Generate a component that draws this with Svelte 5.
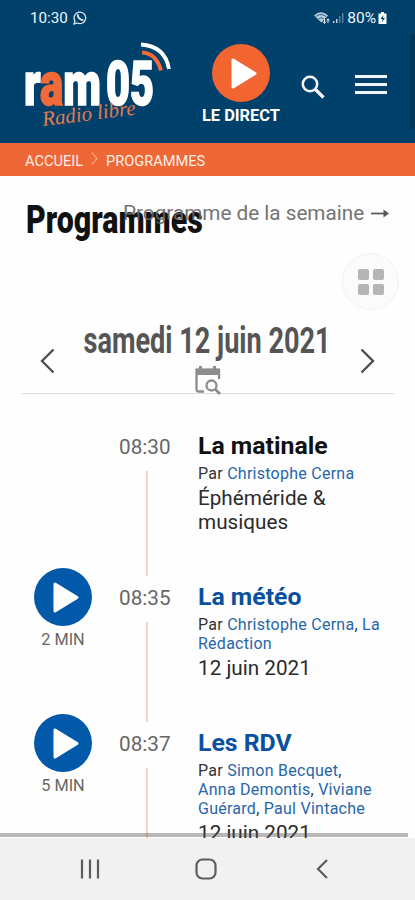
<script>
  const shows = [
    { time: '08:30', title: 'La matinale', authors: ['Christophe Cerna'], text: 'Éphéméride & musiques', height: 151 },
    { time: '08:35', title: 'La météo', authors: ['Christophe Cerna', 'La Rédaction'], text: '12 juin 2021', duration: '2 MIN', height: 146 },
    { time: '08:37', title: 'Les RDV', authors: ['Simon Becquet', 'Anna Demontis', 'Viviane Guérard', 'Paul Vintache'], text: '12 juin 2021', duration: '5 MIN', height: 146 }
  ];
</script>

{#snippet play(color)}
  <svg class="play" viewBox="0 0 58 58" width="58" height="58">
    <circle cx="29" cy="29" r="29" fill={color} />
    <path d="M21 16v27L43 29.5z" fill="#fff" stroke="#fff" stroke-width="3" stroke-linejoin="round" />
  </svg>
{/snippet}

<div class="phone">
  <header>
    <div class="status">
      <span class="clock">10:30</span>
      <svg class="wa" width="14" height="14" viewBox="0 0 14 14" fill="none" stroke="#dbe7f0" stroke-width="1.3">
        <path d="M1 13l.9-3.2A5.8 5.8 0 1 1 4.2 12z" />
        <path d="M4.9 4.1c-.8 1.5 2.4 5.1 4.6 4.9" stroke-width="2" stroke-linecap="round" />
      </svg>
      <svg class="signal" width="31" height="14" viewBox="0 0 31 14">
        <path d="M0 4.500Q7-2 14 4.500L7.500 11.500z" fill="#b9cfdd" />
        <path d="M2 5.500Q7 1.500 12 5.500M4.500 8Q7 5.500 10 8" fill="none" stroke="#00416b" stroke-width=".8" />
        <path d="M10.500 8v4M9 10.500l1.500 2 1.500-2M14 12V8M12.700 9.500L14 7.800l1.400 1.700" fill="none" stroke="#e7eff5" />
        <path d="M19 12v-2h1.500v2zM22 12V8h1.500v4z" fill="#b9cfdd" />
        <path d="M25 12V5h1.500v7zM28 12V2h1.500v10z" fill="#527f9c" />
      </svg>
      <span class="pct">80%</span>
      <svg width="9" height="12" viewBox="0 0 9 12"><path d="M3 0h3v1.500h2.500V12H.5V1.500H3z" fill="#fff" /><path d="M5.500 3L2.500 7h2L4 10l3-4H5z" fill="#00416b" /></svg>
    </div>
    <div class="bar">
      <svg class="logo" width="150" height="92" viewBox="0 0 150 92">
        <g font-family="Roboto, sans-serif" font-weight="900" font-size="61" fill="#fff" stroke="#fff" stroke-width="1.6">
          <text x="-1" y="65.500" textLength="77" lengthAdjust="spacingAndGlyphs">r<tspan fill="#f16a38" stroke="#f16a38">a</tspan>m</text>
          <text x="81" y="65.500" textLength="48" lengthAdjust="spacingAndGlyphs">05</text>
        </g>
        <text x="18" y="87" font-family="'Liberation Serif', serif" font-style="italic" font-size="21" fill="#e47a50" textLength="94" lengthAdjust="spacingAndGlyphs" transform="rotate(-7 18 87)">Radio libre</text>
        <path d="M117 13.500Q131 14 136 31.500" fill="none" stroke="#f16a38" stroke-width="4" />
        <path d="M116 5.500Q140 7 144 30" fill="none" stroke="#fff" stroke-width="3.800" />
      </svg>
      <div class="direct">{@render play('#f26531')}<b>LE DIRECT</b></div>
      <svg class="search" width="24" height="24" viewBox="0 0 24 24" fill="none" stroke="#f4f8fa">
        <circle cx="9" cy="9" r="7.200" stroke-width="2.500" /><path d="M14 14l8.500 8.500" stroke-width="3.200" />
      </svg>
      <svg class="menu" width="32" height="21" viewBox="0 0 32 21"><path d="M0 2.500h32M0 10.500h32M0 18.500h32" stroke="#f2f6f9" stroke-width="3" /></svg>
      <i class="edge"></i>
    </div>
  </header>
  <nav class="crumbs">
    <span class="home">ACCUEIL</span>
    <svg width="7" height="13" viewBox="0 0 7 13"><path d="M.7.500L6 6.500.7 12.500" fill="none" stroke="#fba27a" stroke-width="1.200" /></svg>
    <span class="here">PROGRAMMES</span>
  </nav>
  <main>
    <div class="head">
      <h1>Programmes</h1>
      <div class="week"><span>Programme de la semaine</span>
        <svg width="18" height="9" viewBox="0 0 18 9"><path d="M0 4.500h14" stroke="#444" stroke-width="1.700" /><path d="M12.500 0.500l5.500 4-5.500 4z" fill="#444" /></svg>
      </div>
    </div>
    <div class="tools">
      <div class="grid"><i></i><i></i><i></i><i></i></div>
    </div>
    <div class="day">
      <svg width="15" height="26" viewBox="0 0 15 26"><path d="M13.500 1.500L2 13l11.500 11.500" fill="none" stroke="#4c4c4c" stroke-width="2.300" /></svg>
      <div class="date">
        <h2>samedi 12 juin 2021</h2>
        <svg width="26" height="29" viewBox="0 0 26 29" fill="none" stroke="#8d8d8d">
          <path d="M9 25.500H3.500Q1.500 25.500 1.500 23.500V4H24v9" stroke-width="2.300" />
          <path d="M1 2.500h24v6.500H1zM4 0h3v5H4zM18 0h3v5h-3z" fill="#8d8d8d" stroke="none" />
          <circle cx="16.500" cy="19.500" r="5" stroke-width="2.300" /><path d="M20 23l5 5" stroke-width="2.600" />
        </svg>
      </div>
      <svg width="15" height="26" viewBox="0 0 15 26"><path d="M1.500 1.500L13 13 1.500 24.500" fill="none" stroke="#4c4c4c" stroke-width="2.300" /></svg>
    </div>
    <section>
      {#each shows as show}
        <article style="height: {show.height}px">
          <div class="listen">
            {#if show.duration}{@render play('#0259aa')}<span>{show.duration}</span>{/if}
          </div>
          <div class="when"><time>{show.time}</time><i></i></div>
          <div class="info">
            <h3 class:link={show.duration}>{show.title}</h3>
            <p class="by">Par {#each show.authors as author, i}<a>{author}</a>{i < show.authors.length - 1 ? ', ' : ''}{/each}</p>
            <p class="text">{show.text}</p>
          </div>
        </article>
      {/each}
    </section>
    <div class="shade"></div>
  </main>
  <footer>
    <svg width="20" height="20" viewBox="0 0 20 20"><path d="M2 .500v19M10 .500v19M18 .500v19" stroke="#5d5d5d" stroke-width="2.200" /></svg>
    <svg width="22" height="22" viewBox="0 0 22 22"><rect x="1.500" y="1.500" width="19" height="19" rx="6" fill="none" stroke="#5d5d5d" stroke-width="2.200" /></svg>
    <svg width="12" height="20" viewBox="0 0 12 20"><path d="M11 1L2 10l9 9" fill="none" stroke="#5d5d5d" stroke-width="2.200" /></svg>
  </footer>
</div>

<style>
  :global(body) { margin: 0; }
  .phone { width: 415px; height: 900px; display: flex; flex-direction: column; overflow: hidden; background: #fefefe; font-family: Roboto, sans-serif; color: #222; }
  .phone * { box-sizing: border-box; }
  svg { display: block; flex: none; }
  h1, h2, h3, p { margin: 0; }
  header { height: 143px; background: #00416b; flex: none; }
  .status { height: 34px; display: flex; align-items: center; padding: 1px 28px 0 30px; color: #eff5f9; font-size: 15.2px; }
  .clock { width: 38px; }
  .wa { margin-left: 5px; }
  .signal { margin-left: auto; }
  .pct { margin: 0 2px 0 2px; font-size: 15.500px; }
  .bar { display: flex; height: 109px; padding-left: 25px; }
  .logo { margin-top: 5px; overflow: visible; }
  .direct { margin: 10px 0 0 25px; width: 82px; display: flex; flex-direction: column; align-items: center; color: #fff; font-size: 16.400px; white-space: nowrap; }
  .direct b { margin-top: 4px; line-height: 20px; font-weight: 700; }
  .search { margin: 41px 0 0 19px; }
  .menu { margin: 40px 0 0 30px; }
  .edge { width: 5px; height: 95px; margin-left: auto; background: #003458; }
  .crumbs { height: 33px; background: #ee6737; flex: none; display: flex; align-items: center; padding: 2px 0 0 25px; color: #fdeee6; font-size: 14.6px; }
  .crumbs svg { margin: -4px 8px 0 8px; }
  main { height: 662px; flex: none; overflow: hidden; position: relative; }
  .head { height: 76px; padding: 21px 0 0 26px; display: flex; align-items: flex-start; }
  h1 { width: 97px; font-size: 39px; line-height: 46px; font-weight: 900; color: #111; transform: scaleX(0.778); transform-origin: 0 50%; white-space: nowrap; }
  .week { display: flex; align-items: center; gap: 7px; margin-top: 4px; color: #666; font-size: 20.700px; line-height: 24px; white-space: nowrap; position: relative; opacity: .9; }
  .tools { height: 60px; display: flex; justify-content: flex-end; padding: 1px 16px 0 0; }
  .grid { width: 57px; height: 57px; border: 1px solid #f2f2f2; border-radius: 50%; background: #fbfbfb; display: grid; grid-template-columns: 11px 11px; grid-template-rows: 11px 11px; gap: 4px; place-content: center; }
  .grid i { background: #b5b5b5; border-radius: 2px; }
  .day { height: 82px; margin: 0 21px 0 22px; border-bottom: 1px solid #dcdcdc; display: flex; justify-content: space-between; align-items: flex-start; padding: 0 19px 0 18px; }
  .day > svg { margin-top: 36px; }
  .date { flex: 1; min-width: 0; display: flex; flex-direction: column; align-items: center; padding-top: 8px; }
  h2 { font-size: 36px; line-height: 42px; height: 46px; font-weight: 700; color: #555; white-space: nowrap; transform: scaleX(0.753); }
  section { padding: 38px 0 0 22px; }
  article { display: grid; grid-template-columns: 82px 94px 184px; }
  .listen { display: flex; flex-direction: column; align-items: center; margin-top: -15px; font-size: 16.300px; color: #666; }
  .listen span { margin-top: 4px; line-height: 20px; }
  .when { display: flex; flex-direction: column; padding-left: 15px; }
  time { font-size: 20.700px; line-height: 30px; color: #666; }
  .when i { flex: 1; width: 2px; margin: 9px 0 7px 27px; background: #fad0c0; }
  h3 { font-size: 24.800px; line-height: 28px; font-weight: 700; color: #111; }
  h3.link { color: #0950a0; }
  .by { margin-top: 4px; font-size: 16px; letter-spacing: 0.26px; line-height: 19px; color: #333; }
  .by a { color: #2766a9; }
  .text { margin-top: 3px; font-size: 20.700px; line-height: 24px; color: #2b2b2b; }
  .shade { position: absolute; left: 0; top: 657px; width: 408px; height: 4px; background: rgba(80, 80, 80, .4); }
  footer { flex: 1; background: #f1f1f1; display: flex; align-items: center; padding: 0 0 0 80px; }
  footer svg:nth-child(2) { margin-left: 95px; }
  footer svg:nth-child(3) { margin-left: 99px; }
</style>
